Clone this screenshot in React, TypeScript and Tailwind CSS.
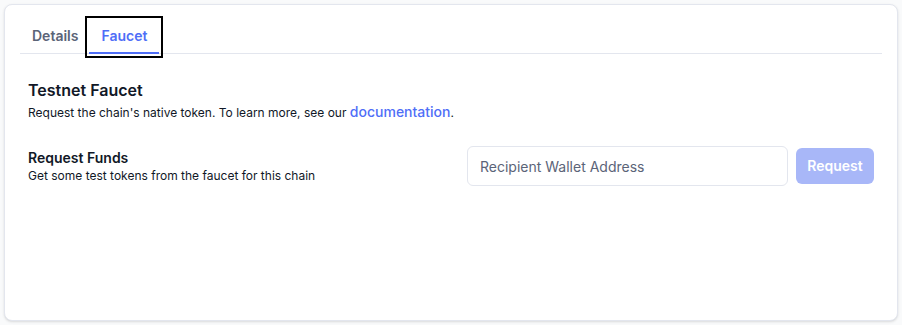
import React from "react";

const App = () => {
  const [tab, setTab] = React.useState<"details" | "faucet">("faucet");
  const [address, setAddress] = React.useState<string>("");

  return (
    <div className="h-[325px] w-[902px] bg-[#f9fafb] p-1 font-['Inter',sans-serif] antialiased">
      <div className="h-[317px] rounded-lg border border-[#e3e6ee] bg-white px-[15px] pt-[15px] shadow-sm">
        <div className="flex border-b border-[#e3e6ee]">
          <button
            type="button"
            onClick={() => setTab("details")}
            className={
              tab === "details"
                ? "-mb-px h-[34px] border-b-2 border-[#4f6ef7] px-3 text-sm font-semibold text-[#4f6ef7] outline-2 outline-offset-2 outline-black"
                : "-mb-px h-[34px] border-b-2 border-transparent pl-3 pr-[11px] text-sm font-semibold text-[#5b6478]"
            }
          >
            Details
          </button>
          <button
            type="button"
            onClick={() => setTab("faucet")}
            className={
              tab === "faucet"
                ? "-mb-px h-[34px] border-b-2 border-[#4f6ef7] px-3 text-sm font-semibold text-[#4f6ef7] outline-2 outline-offset-2 outline-black"
                : "-mb-px h-[34px] border-b-2 border-transparent px-3 text-sm font-semibold text-[#5b6478]"
            }
          >
            Faucet
          </button>
        </div>

        {tab === "faucet" && (
          <div className="mt-6 px-2">
            <h2 className="text-base font-semibold leading-6 text-[#111827]">
              Testnet Faucet
            </h2>
            <p className="text-xs leading-5 text-[#111827]">
              Request the chain's native token. To learn more, see our{" "}
              <a href="#" className="text-sm font-medium text-[#4f6ef7]">
                documentation
              </a>
              .
            </p>

            <div className="mt-[23px] flex items-center justify-between">
              <div>
                <h3 className="text-sm font-semibold leading-5 text-[#111827]">
                  Request Funds
                </h3>
                <p className="text-xs leading-4 text-[#111827]">
                  Get some test tokens from the faucet for this chain
                </p>
              </div>
              <div className="flex items-center gap-2">
                <input
                  type="text"
                  value={address}
                  onChange={(e) => setAddress(e.target.value)}
                  placeholder="Recipient Wallet Address"
                  className="h-10 w-[321px] rounded-md border border-[#e3e6ee] px-3 text-sm text-[#111827] placeholder:text-[#5b6478] focus:outline-none"
                />
                <button
                  type="button"
                  disabled={!address}
                  className="h-9 w-[78px] rounded-md bg-[#a8b7f8] text-sm font-semibold text-white"
                >
                  Request
                </button>
              </div>
            </div>
          </div>
        )}
      </div>
    </div>
  );
};

export default App;
